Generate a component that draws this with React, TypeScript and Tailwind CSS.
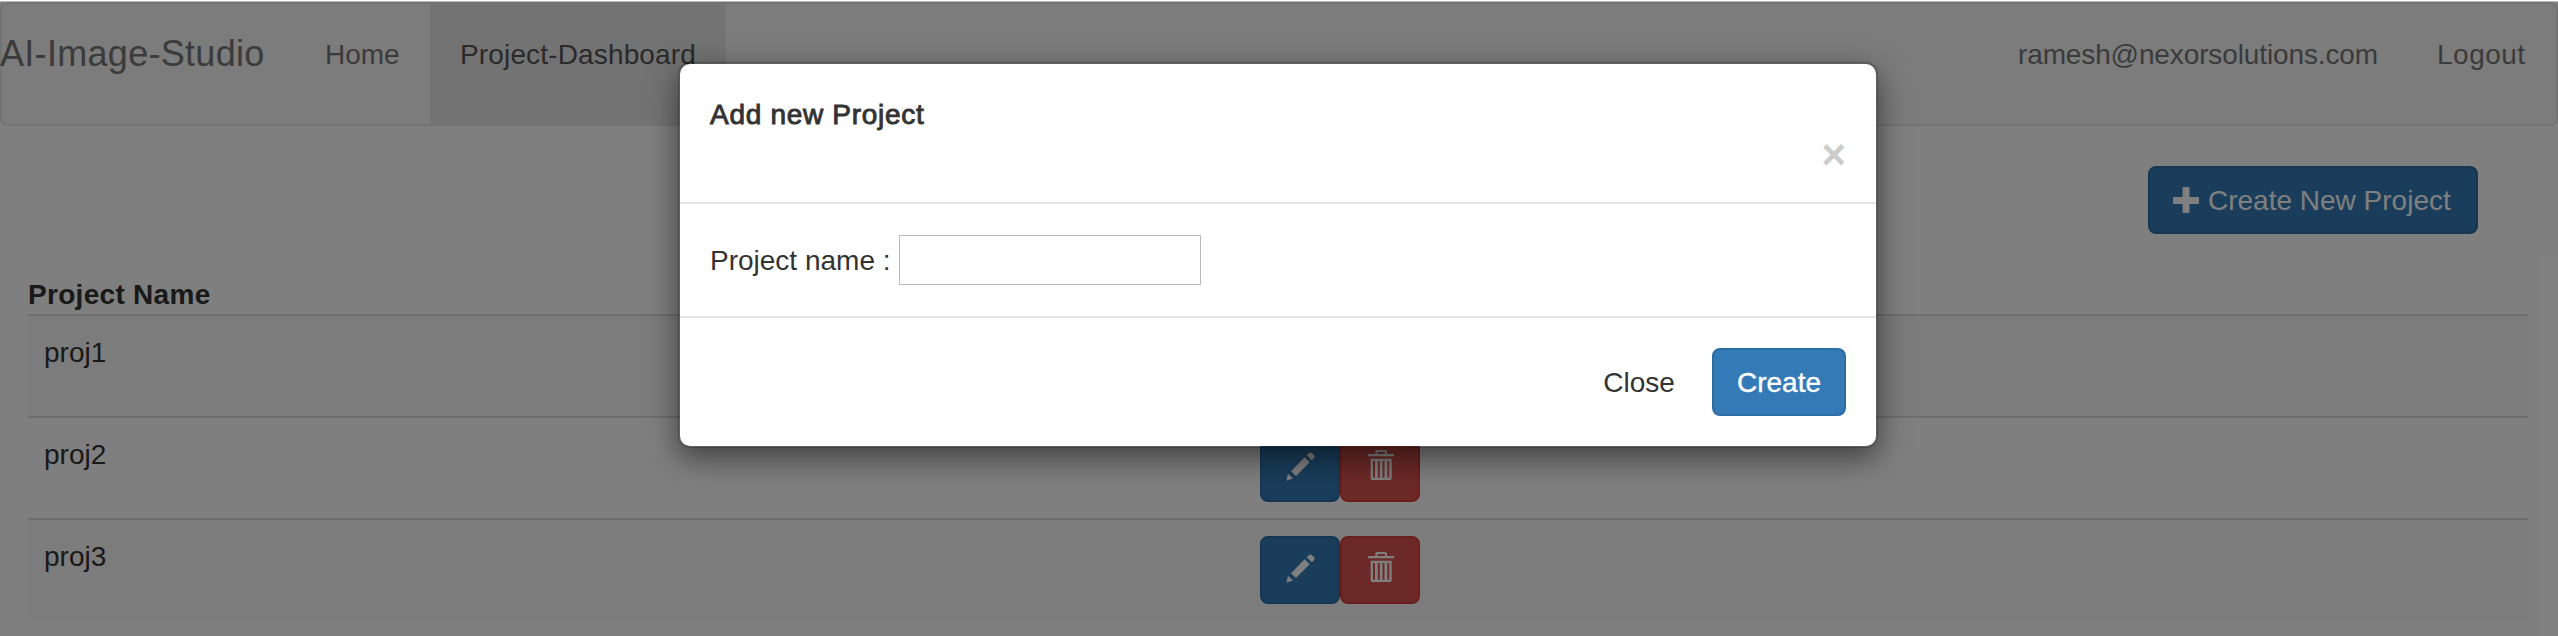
function PlusIcon() {
  return (
    <svg width="26" height="26" viewBox="0 0 26 26" fill="currentColor" className="shrink-0">
      <rect x="0" y="10" width="26" height="7" rx="1" />
      <rect x="9.5" y="0" width="7" height="26" rx="1" />
    </svg>
  );
}

function PencilIcon() {
  return (
    <svg width="29" height="29" viewBox="0 0 87 87" fill="currentColor">
      <path d="M1 86L6 65L21 79.500Z" />
      <path d="M15 58L56 16L71 31L30 72Z" />
      <path d="M62.500 9.500L69 3Q73 -0.500 77 3L84 10Q87.500 14 84 18L77.500 24.500Z" />
    </svg>
  );
}

function TrashIcon() {
  return (
    <svg width="26" height="30" viewBox="0 0 78 90" fill="currentColor" fillRule="evenodd">
      <path d="M22 12V5Q22 0 27 0H52Q57 0 57 5V12H78V19H0V12ZM28 12H51V6H28Z" />
      <path d="M8 26H71V85Q71 90 66 90H13Q8 90 8 85ZM15 33V83H21V33ZM29.500 33V83H35.500V33ZM43.500 33V83H49.500V33ZM58 33V83H64V33Z" />
    </svg>
  );
}

function Navbar() {
  return (
    <nav className="flex h-[124px] shrink-0 items-stretch rounded-lg border-2 border-[#e7e7e7] bg-[#f8f8f8] text-[#777]">
      <div className="-ml-0.5 w-[296px] pt-[30px] text-[36px] leading-[40px] tracking-[0.3px]">AI-Image-Studio</div>
      <a className="w-[134px] pt-[31px] pl-[29px]">Home</a>
      <a className="w-[296px] bg-[#e7e7e7] pt-[31px] pl-[30px] tracking-[0.15px] text-[#555]">Project-Dashboard</a>
      <a className="ml-auto pt-[31px] pr-[28px] tracking-[-0.12px]">ramesh@nexorsolutions.com</a>
      <a className="w-[150px] pt-[31px] pl-[31px] tracking-[0.5px]">Logout</a>
    </nav>
  );
}

function ProjectRow({ name, striped }: { name: string; striped: boolean }) {
  return (
    <div className={striped ? "flex h-[102px] border-t-2 border-[#ddd] bg-[#f9f9f9]" : "flex h-[102px] border-t-2 border-[#ddd]"}>
      <div className="w-[1216px] px-4 pt-[17px]">{name}</div>
      <div className="flex px-4 pt-4">
        <button className="flex h-[68px] w-20 items-center justify-center rounded-lg border-2 border-[#2e6da4] bg-[#337ab7] pb-1 text-white">
          <PencilIcon />
        </button>
        <button className="flex h-[68px] w-20 items-center justify-center rounded-lg border-2 border-[#d43f3a] bg-[#d9534f] pb-1.5 pl-0.5 text-white">
          <TrashIcon />
        </button>
      </div>
    </div>
  );
}

function AddProjectDialog() {
  return (
    <div className="w-[1200px] rounded-xl border-2 border-black/20 bg-white bg-clip-padding shadow-[0_10px_30px_rgba(0,0,0,0.5)]">
      <div className="h-[140px] border-b-2 border-[#e5e5e5] p-[30px]">
        <h4 className="pt-px font-normal tracking-[0.7px] [-webkit-text-stroke:0.9px_#333]">Add new Project</h4>
        <div className="-mt-px flex justify-end">
          <button className="text-[42px] leading-[42px] font-bold text-[#ccc]">×</button>
        </div>
      </div>
      <div className="flex h-[112px] items-center gap-[7px] px-[30px]">
        <label className="w-[182px] pt-px whitespace-nowrap">Project name :</label>
        <input className="h-[50px] w-[302px] border border-[#bbb] bg-white outline-none" />
      </div>
      <div className="flex h-[130px] justify-end gap-2.5 border-t-2 border-[#e5e5e5] p-[30px]">
        <button className="h-[68px] w-[126px] pt-0.5 text-[#333]">Close</button>
        <button className="h-[68px] w-[134px] rounded-lg border-2 border-[#2e6da4] bg-[#337ab7] pt-0.5 text-white [-webkit-text-stroke:0.4px_#fff]">Create</button>
      </div>
    </div>
  );
}

const projects = ["proj1", "proj2", "proj3"];

export default function App() {
  return (
    <div className="relative flex h-[636px] w-[2558px] flex-col overflow-hidden bg-white font-['Liberation_Sans',Arial,sans-serif] text-[28px] leading-[40px] text-[#333]">
      <div className="h-0.5 shrink-0 border-b border-[#b4bab7] bg-white" />
      <Navbar />
      <main className="flex flex-col pl-7 pr-[30px]">
        <div className="flex justify-end pt-10 pr-[50px] pb-10">
          <button className="flex h-[68px] w-[330px] items-center gap-[9px] whitespace-nowrap rounded-lg border-2 border-[#2e6da4] bg-[#337ab7] pl-[23px] text-white">
            <PlusIcon />
            <span className="pt-0.5">Create New Project</span>
          </button>
        </div>
        <div className="h-10 pt-px font-bold tracking-[0.3px]">Project Name</div>
        {projects.map((name, i) => (
          <ProjectRow key={name} name={name} striped={i % 2 === 0} />
        ))}
      </main>
      <div className="absolute inset-x-0 top-0.5 bottom-0 flex items-start justify-center bg-black/50 pt-[60px] pr-0.5">
        <AddProjectDialog />
      </div>
    </div>
  );
}
